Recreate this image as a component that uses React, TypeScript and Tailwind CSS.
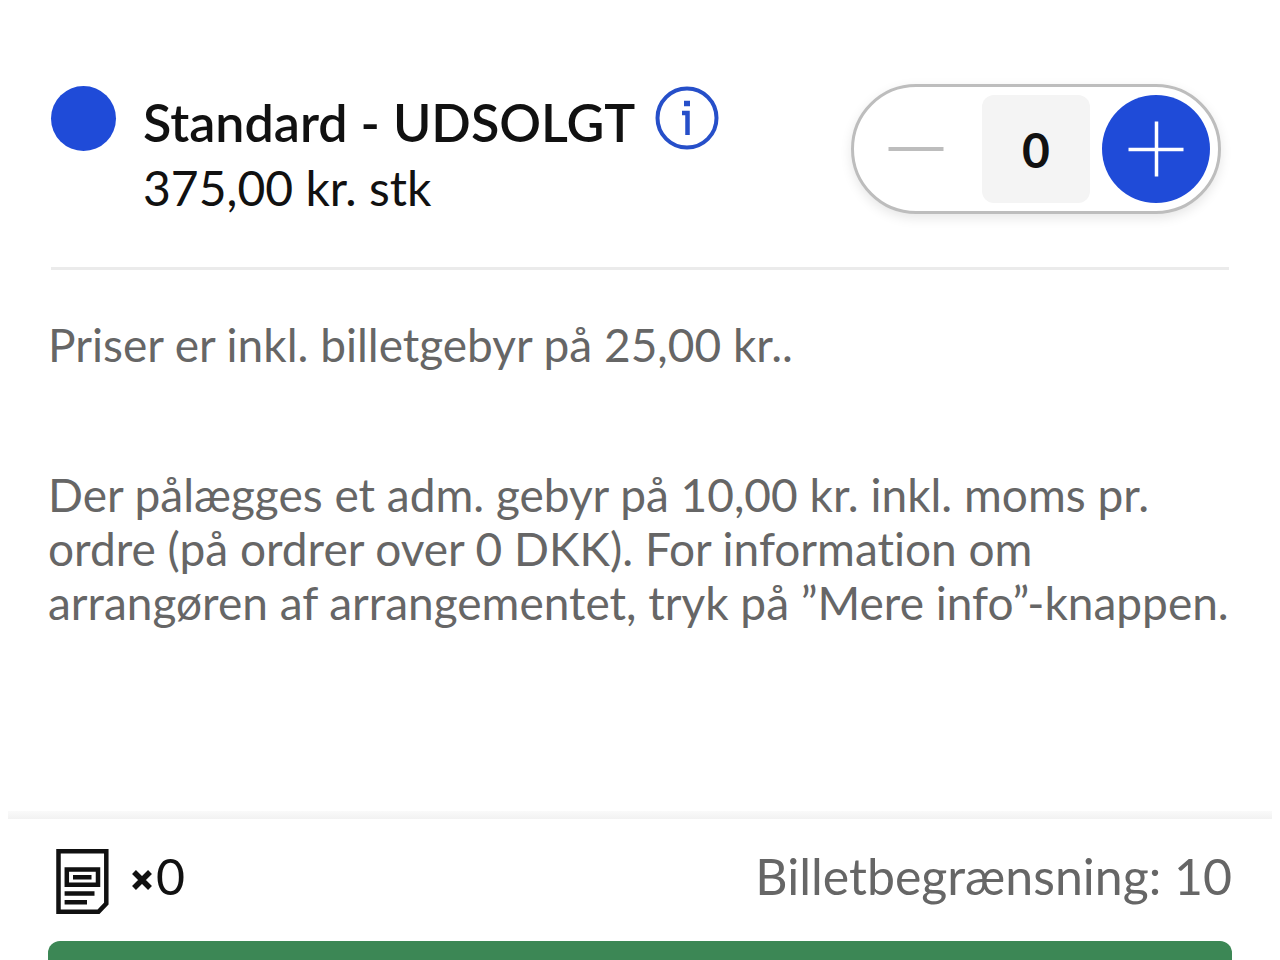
import { useState } from "react";

function InfoIcon() {
  return (
    <svg viewBox="0 0 64 64" className="size-16" fill="none" stroke="#264fc9" aria-hidden="true">
      <circle cx="32" cy="32" r="29.5" strokeWidth="4" />
      <path d="M27 27H32.5V49" strokeWidth="4.5" />
      <path d="M29 17.5H35" strokeWidth="5.5" />
    </svg>
  );
}

function TicketIcon() {
  return (
    <svg viewBox="0 0 54 66" className="h-[66px] w-[54px]" fill="none" stroke="#111" strokeWidth="4.5" aria-hidden="true">
      <path d="M2.5 2.3H50.3V54.5L42.5 62.8H2.5Z" />
      <path d="M10.8 20.5H42V35.7H10.8Z" />
      <path d="M17 28.2H35.5M8.6 44.5H38.5M8.6 53.3H31" />
    </svg>
  );
}

function Stepper() {
  const [count, setCount] = useState(0);
  return (
    <div className="flex shrink-0 items-center gap-3 rounded-full border-[3px] border-[#bdbdbd] bg-white p-2 shadow-[0_4px_12px_rgba(0,0,0,0.10)]">
      <button
        type="button"
        aria-label="Færre"
        onClick={() => setCount(Math.max(0, count - 1))}
        className="flex size-27 items-center justify-center rounded-full"
      >
        <svg viewBox="0 0 56 56" className="size-14" stroke="#bdbdbd" strokeWidth="4" aria-hidden="true">
          <path d="M0.5 28H55.5" />
        </svg>
      </button>
      <input
        aria-label="Antal"
        readOnly
        value={count}
        className="size-27 rounded-xl bg-[#f4f4f4] text-center text-[48px] font-bold text-[#111] outline-none"
      />
      <button
        type="button"
        aria-label="Flere"
        onClick={() => setCount(count + 1)}
        className="flex size-27 items-center justify-center rounded-full bg-[#1f4bd8]"
      >
        <svg viewBox="0 0 56 56" className="size-14" stroke="#fff" strokeWidth="3.5" aria-hidden="true">
          <path d="M0.5 28.5H55.5M28.5 0.5V55.5" />
        </svg>
      </button>
    </div>
  );
}

export default function App() {
  return (
    <div className="flex min-h-screen flex-col bg-white font-['Lato',sans-serif] text-[#111] [font-variant-ligatures:none]">
      <main className="grow px-12">
        <section className="mx-[3px] flex items-start justify-between border-b-[3px] border-[#ebebeb] pt-[84px] pr-2 pb-[46px]">
          <div className="flex items-start gap-[27px]">
            <span className="mt-0.5 size-[65px] shrink-0 rounded-full bg-[#1f4bd8]" />
            <div className="pt-[5px] leading-[66px]">
              <div className="flex items-center gap-5">
                <h2 className="text-[52px] font-semibold">Standard - UDSOLGT</h2>
                <button type="button" aria-label="Information" className="-mt-2 rounded-full">
                  <InfoIcon />
                </button>
              </div>
              <p className="text-[48px]">375,00 kr. stk</p>
            </div>
          </div>
          <Stepper />
        </section>
        <div className="pt-12 text-[46px] leading-[54px] text-[#666]">
          <p>Priser er inkl. billetgebyr på 25,00 kr..</p>
          <p className="pt-24">
            Der pålægges et adm. gebyr på 10,00 kr. inkl. moms pr.
            <br />
            ordre (på ordrer over 0 DKK). For information om
            <br />
            arrangøren af arrangementet, tryk på ”Mere info”-knappen.
          </p>
        </div>
      </main>
      <footer className="px-2">
        <div className="h-2 bg-linear-to-b from-[#fafafa] to-[#f2f2f2]" />
        <div className="px-10">
          <div className="flex items-start justify-between pt-6 pb-[26px] text-[50px] leading-[66px]">
            <div className="flex items-start pl-2">
              <div className="pt-1.5">
                <TicketIcon />
              </div>
              <svg viewBox="0 0 20 20" className="mt-[27px] mr-1 ml-[22px] size-5" stroke="#111" strokeWidth="5.5" role="img" aria-label="gange">
                <path d="M2 2L18 18M18 2L2 18" />
              </svg>
              <span>0</span>
            </div>
            <p className="text-[#666]">Billetbegrænsning: 10</p>
          </div>
          <button type="button" aria-label="Fortsæt" className="block h-[19px] w-full rounded-t-xl bg-[#3c8755]" />
        </div>
      </footer>
    </div>
  );
}
